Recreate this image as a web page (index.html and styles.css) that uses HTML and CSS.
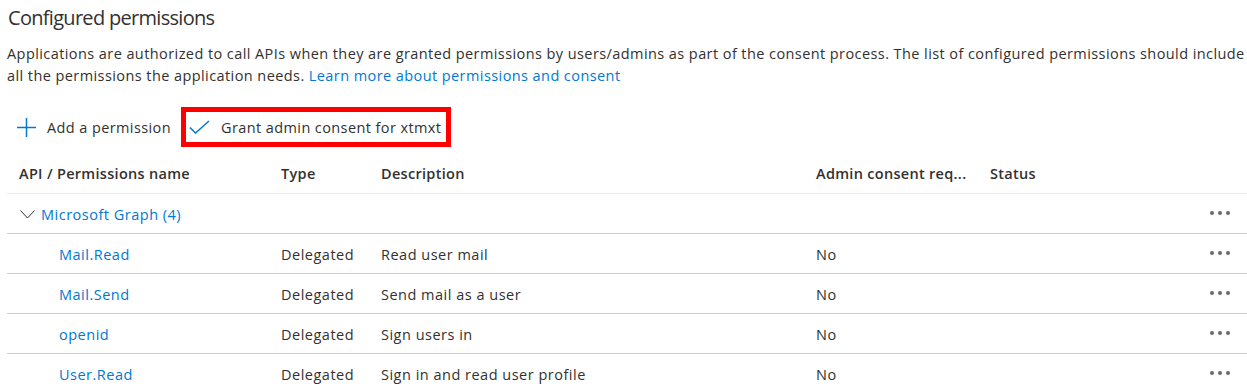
FILE: index.html
```html
<!DOCTYPE html>
<html lang="en">
<head>
    <meta charset="UTF-8">
    <meta name="viewport" content="width=device-width, initial-scale=1.0">
    <title>API permissions</title>
    <link rel="stylesheet" href="styles.css">
</head>
<body>
    <h2 class="title">Configured permissions</h2>
    <p class="intro">
        Applications are authorized to call APIs when they are granted permissions by users/admins as part of the consent process. The list of configured permissions should include
        all the permissions the application needs. <a href="#">Learn more about permissions and consent</a>
    </p>

    <div class="toolbar">
        <button class="cmd">
            <svg width="19" height="19" viewBox="0 0 19 19"><path d="M9.5 0v19M0 9.5h19" stroke="#0078d4" stroke-width="1.5" fill="none"/></svg>
            Add a permission
        </button>
        <button class="cmd grant">
            <svg width="21" height="14" viewBox="0 0 21 14"><path d="M1 7.5l5.5 5.5L20 1" stroke="#0078d4" stroke-width="1.5" fill="none"/></svg>
            Grant admin consent for xtmxt
        </button>
    </div>

    <div class="perms">
        <div class="row head">
            <div>API / Permissions name</div>
            <div>Type</div>
            <div>Description</div>
            <div>Admin consent req...</div>
            <div>Status</div>
            <div></div>
        </div>
        <div class="row group">
            <div class="group-name">
                <svg width="15" height="9" viewBox="0 0 15 9"><path d="M0.5 0.5l7 7.5 7-7.5" stroke="#323130" stroke-width="1" fill="none"/></svg>
                <a href="#">Microsoft Graph (4)</a>
            </div>
            <div></div><div></div><div></div><div></div>
            <div class="more"><span></span><span></span><span></span></div>
        </div>
        <div class="row">
            <div class="perm"><a href="#">Mail.Read</a></div>
            <div>Delegated</div>
            <div>Read user mail</div>
            <div>No</div>
            <div></div>
            <div class="more"><span></span><span></span><span></span></div>
        </div>
        <div class="row">
            <div class="perm"><a href="#">Mail.Send</a></div>
            <div>Delegated</div>
            <div>Send mail as a user</div>
            <div>No</div>
            <div></div>
            <div class="more"><span></span><span></span><span></span></div>
        </div>
        <div class="row">
            <div class="perm"><a href="#">openid</a></div>
            <div>Delegated</div>
            <div>Sign users in</div>
            <div>No</div>
            <div></div>
            <div class="more"><span></span><span></span><span></span></div>
        </div>
        <div class="row">
            <div class="perm"><a href="#">User.Read</a></div>
            <div>Delegated</div>
            <div>Sign in and read user profile</div>
            <div>No</div>
            <div></div>
            <div class="more"><span></span><span></span><span></span></div>
        </div>
    </div>
</body>
</html>
```

FILE: styles.css
```css
* {
    box-sizing: border-box;
}
body {
    margin: 0;
    padding: 0 0 0 7px;
    font-family: "Open Sans", sans-serif;
    font-size: 14.5px;
    letter-spacing: 0.5px;
    color: #323130;
    background: #fff;
    overflow: hidden;
}
a {
    color: #0078d4;
    text-decoration: none;
}
.title {
    margin: 0;
    padding: 4px 0 0 1px;
    height: 36px;
    font-size: 20px;
    font-weight: 400;
    line-height: 28px;
    letter-spacing: -0.7px;
}
.intro {
    margin: 7px 0 0;
    line-height: 22px;
    letter-spacing: 0.42px;
}
.toolbar {
    display: flex;
    margin-top: 20px;
    height: 40px;
}
.cmd {
    display: flex;
    align-items: center;
    gap: 11px;
    height: 40px;
    padding: 0 10px;
    border: none;
    background: none;
    font: inherit;
    letter-spacing: 0.4px;
    color: #323130;
    cursor: pointer;
}
.grant {
    padding: 0 10px 0 8px;
    outline: 5px solid #ff0000;
    outline-offset: -5px;
}
.perms {
    margin-top: 7px;
}
.row {
    display: grid;
    grid-template-columns: 262px 100px 435px 174px 1fr 50px;
    align-items: center;
    height: 40px;
    padding: 0 0 0 12px;
    border-bottom: 1px solid #cfcdcb;
}
.row > div {
    padding-top: 2px;
    white-space: nowrap;
}
.head {
    font-weight: 600;
    letter-spacing: 0.3px;
    border-bottom-color: #edebe9;
}
.head > div {
    padding-top: 0;
}
.group-name {
    display: flex;
    align-items: center;
    gap: 6px;
    margin-left: 1px;
}
.perm {
    padding-left: 40px;
}
.more {
    display: flex;
    gap: 4px;
    align-items: center;
    padding: 0 0 0 13px !important;
    margin-top: -2px;
}
.more span {
    width: 4px;
    height: 4px;
    border-radius: 50%;
    background: #6b6967;
}
```
